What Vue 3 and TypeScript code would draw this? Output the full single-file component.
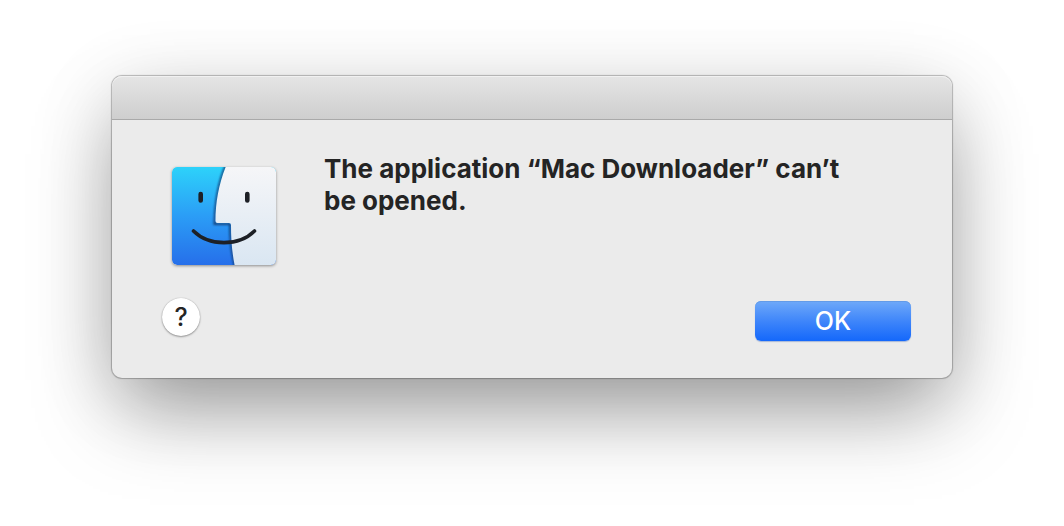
<script setup lang="ts">
import { ref } from 'vue'

const appName = 'Mac Downloader'
const open = ref(true)
</script>

<template>
  <main class="desktop">
    <section v-if="open" class="dialog" role="alertdialog" aria-labelledby="message">
      <header class="titlebar"></header>
      <div class="content">
        <svg class="finder" viewBox="0 0 104 98" aria-hidden="true">
          <defs>
            <linearGradient id="blue" x1="0" y1="0" x2="0" y2="1">
              <stop offset="0" stop-color="#2dd2fa" />
              <stop offset="0.5" stop-color="#2b9df6" />
              <stop offset="1" stop-color="#266fea" />
            </linearGradient>
            <linearGradient id="pale" x1="0" y1="0" x2="0" y2="1">
              <stop offset="0" stop-color="#f6f6f8" />
              <stop offset="1" stop-color="#d9e6f2" />
            </linearGradient>
            <clipPath id="tile"><rect width="104" height="98" rx="5" /></clipPath>
            <filter id="soft" x="-20%" y="-20%" width="140%" height="140%">
              <feGaussianBlur stdDeviation="0.8" />
            </filter>
          </defs>
          <g clip-path="url(#tile)">
            <rect width="104" height="98" fill="url(#blue)" />
            <path d="M54 -2C46 16 43 36 42.500 57H58C58 72 59.500 86 63 100" fill="none" stroke="#123f78" stroke-width="2" filter="url(#soft)" />
            <path d="M54.500 -2C47 16 43.500 35 43.500 54Q43.500 56 45.500 56H57Q59 56 59 58C59 72 60 86 63 100H106V-2Z" fill="url(#pale)" />
          </g>
          <g fill="none" stroke="#1d2026" stroke-linecap="round">
            <path d="M28.700 27V33.500M75.300 27V33.500" stroke-width="4.600" />
            <path d="M21.500 64C37 79.500 67 79.500 82.500 64" stroke-width="3.600" />
          </g>
        </svg>
        <h1 id="message" class="message">The application “{{ appName }}” can’t be opened.</h1>
      </div>
      <footer class="actions">
        <button class="help" type="button" aria-label="Help">?</button>
        <button class="ok" type="button" @click="open = false">OK</button>
      </footer>
    </section>
  </main>
</template>

<style>
body {
  background: #fff;
}
</style>

<style scoped>
.desktop {
  box-sizing: border-box;
  min-height: 100vh;
  padding: 76px 112px 148px;
  overflow: hidden;
  font-family: Inter, "Liberation Sans", sans-serif;
  color: #242424;
}
.dialog {
  border-radius: 10px;
  background: #ebebeb;
  box-shadow:
    0 0 1px 1px rgba(0, 0, 0, 0.26),
    0 16px 80px rgba(0, 0, 0, 0.14),
    0 40px 80px -10px rgba(0, 0, 0, 0.34);
}
.titlebar {
  box-sizing: border-box;
  height: 44px;
  border-bottom: 1px solid #a9a9a9;
  border-radius: 10px 10px 0 0;
  background: linear-gradient(#e5e5e5, #cecece);
  box-shadow: inset 0 1px #f1f1f1;
}
.content {
  display: flex;
  align-items: flex-start;
  gap: 48px;
  padding: 33px 60px 0;
}
.finder {
  flex: none;
  width: 104px;
  height: 98px;
  margin-top: 14px;
  border-radius: 5px;
  box-shadow: 0 1px 3px rgba(0, 0, 0, 0.4);
}
.message {
  max-width: 530px;
  margin: 0;
  font-size: 26px;
  line-height: 32px;
  font-weight: 700;
}
.actions {
  display: flex;
  align-items: center;
  justify-content: space-between;
  padding: 33px 41px 34px 50px;
}
.help,
.ok {
  padding: 0;
  border: 0;
  font-family: inherit;
  font-size: 25px;
  font-weight: 500;
}
.help {
  width: 38px;
  height: 38px;
  margin-bottom: 8px;
  border-radius: 50%;
  background: #fff;
  color: #242424;
  line-height: 38px;
  box-shadow: 0 0 1px rgba(0, 0, 0, 0.3), 0 1px 2px rgba(0, 0, 0, 0.35);
}
.ok {
  width: 156px;
  height: 40px;
  border-radius: 6px;
  background: linear-gradient(#6fa9f9, #3f86fa 50%, #1468fb);
  color: #fff;
  line-height: 40px;
  box-shadow: inset 0 1px #639be8, 0 1px 1px rgba(40, 90, 180, 0.35);
}
</style>
